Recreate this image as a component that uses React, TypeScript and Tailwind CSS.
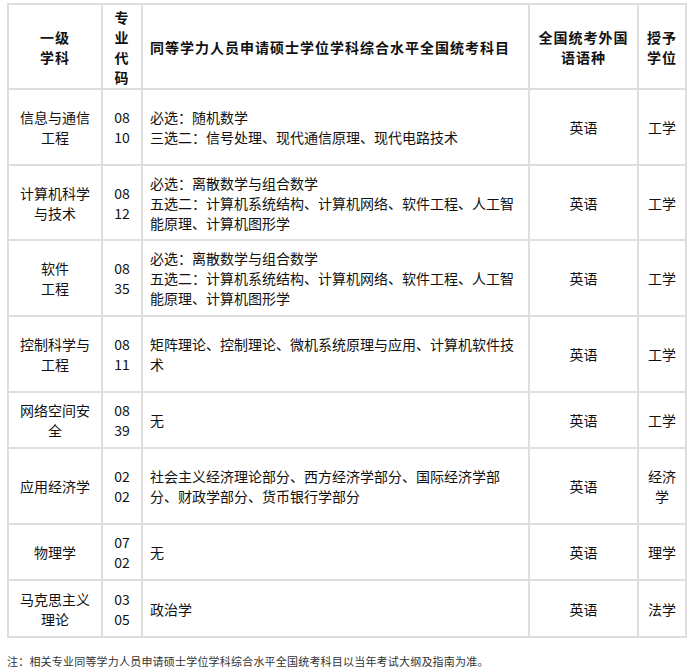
import React from "react";

type Row = {
  h: string;
  subject: React.ReactNode;
  code: [string, string];
  content: React.ReactNode;
  lang: string;
  degree: string;
};

const rows: Row[] = [
  {
    h: "h-[76px]",
    subject: "信息与通信工程",
    code: ["08", "10"],
    content: (
      <>
        <div>必选：随机数学</div>
        <div>三选二：信号处理、现代通信原理、现代电路技术</div>
      </>
    ),
    lang: "英语",
    degree: "工学",
  },
  {
    h: "h-[75px]",
    subject: "计算机科学与技术",
    code: ["08", "12"],
    content: (
      <>
        <div>必选：离散数学与组合数学</div>
        <div>五选二：计算机系统结构、计算机网络、软件工程、人工智能原理、计算机图形学</div>
      </>
    ),
    lang: "英语",
    degree: "工学",
  },
  {
    h: "h-[76px]",
    subject: (
      <>
        软件
        <br />
        工程
      </>
    ),
    code: ["08", "35"],
    content: (
      <>
        <div>必选：离散数学与组合数学</div>
        <div>五选二：计算机系统结构、计算机网络、软件工程、人工智能原理、计算机图形学</div>
      </>
    ),
    lang: "英语",
    degree: "工学",
  },
  {
    h: "h-[76px]",
    subject: "控制科学与工程",
    code: ["08", "11"],
    content: <div>矩阵理论、控制理论、微机系统原理与应用、计算机软件技术</div>,
    lang: "英语",
    degree: "工学",
  },
  {
    h: "h-[56px]",
    subject: "网络空间安全",
    code: ["08", "39"],
    content: <div>无</div>,
    lang: "英语",
    degree: "工学",
  },
  {
    h: "h-[76px]",
    subject: "应用经济学",
    code: ["02", "02"],
    content: <div>社会主义经济理论部分、西方经济学部分、国际经济学部分、财政学部分、货币银行学部分</div>,
    lang: "英语",
    degree: "经济学",
  },
  {
    h: "h-[56px]",
    subject: "物理学",
    code: ["07", "02"],
    content: <div>无</div>,
    lang: "英语",
    degree: "理学",
  },
  {
    h: "h-[57px]",
    subject: "马克思主义理论",
    code: ["03", "05"],
    content: <div>政治学</div>,
    lang: "英语",
    degree: "法学",
  },
];

const cell = "border-2 border-[#dedede] px-[7px] py-0 align-middle";

export default function App() {
  return (
    <div
      className="w-[690px] h-[670px] bg-white text-[#111] overflow-hidden"
      style={{ fontFamily: '"Noto Sans CJK SC", "Noto Sans", sans-serif' }}
    >
      <div className="pt-[3px] pl-[7px]">
        <table className="w-[678px] table-fixed border-collapse text-[14px] leading-[20px]">
          <colgroup>
            <col className="w-[94px]" />
            <col className="w-[40px]" />
            <col className="w-[387px]" />
            <col className="w-[109px]" />
            <col className="w-[48px]" />
          </colgroup>
          <thead>
            <tr className="h-[85px] font-bold leading-[20px] tracking-[1px]">
              <th className={`${cell} text-center font-bold`}>
                一级
                <br />
                学科
              </th>
              <th className={`${cell} text-center font-bold`}>专业代码</th>
              <th className={`${cell} text-left font-bold`}>同等学力人员申请硕士学位学科综合水平全国统考科目</th>
              <th className={`${cell} text-center font-bold`}>全国统考外国语语种</th>
              <th className={`${cell} text-center font-bold`}>授予学位</th>
            </tr>
          </thead>
          <tbody>
            {rows.map((r, i) => (
              <tr key={i} className={r.h}>
                <td className={`${cell} text-center`}>{r.subject}</td>
                <td className={`${cell} text-center`}>
                  {r.code[0]}
                  <br />
                  {r.code[1]}
                </td>
                <td className={`${cell} text-left`}>{r.content}</td>
                <td className={`${cell} text-center`}>{r.lang}</td>
                <td className={`${cell} text-center`}>{r.degree}</td>
              </tr>
            ))}
          </tbody>
        </table>
        <div className="mt-[16px] text-[11px] leading-[14px] tracking-[0.2px] text-[#333]">
          注：相关专业同等学力人员申请硕士学位学科综合水平全国统考科目以当年考试大纲及指南为准。
        </div>
      </div>
    </div>
  );
}
